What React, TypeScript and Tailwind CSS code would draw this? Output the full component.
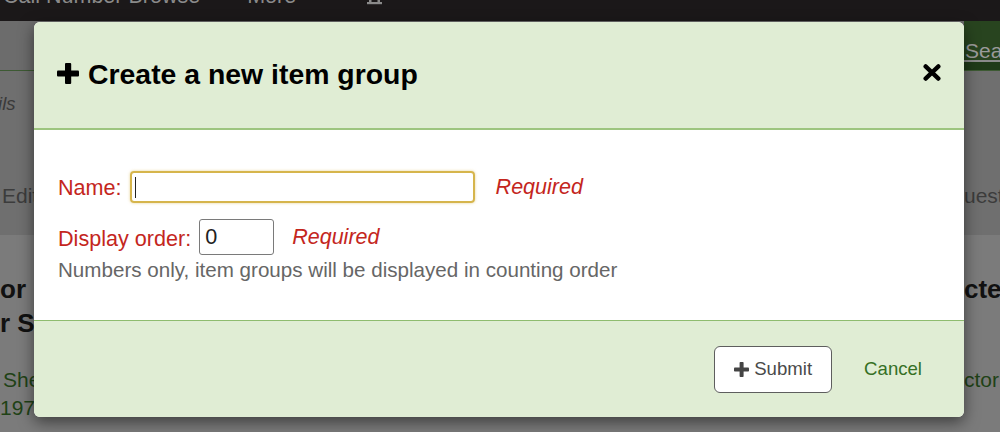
import React from "react";

function PlusIcon({ className }: { className?: string }) {
  return (
    <svg viewBox="0 0 22 21" className={className} fill="currentColor">
      <rect x="8" y="0" width="6.2" height="21" rx="1" />
      <rect x="0" y="7.4" width="22" height="6.2" rx="1" />
    </svg>
  );
}

function SmallPlus({ className }: { className?: string }) {
  return (
    <svg viewBox="0 0 15 15" className={className} fill="currentColor">
      <rect x="5.6" y="0" width="4" height="15" rx="0.8" />
      <rect x="0" y="5.5" width="15" height="4" rx="0.8" />
    </svg>
  );
}

function CloseIcon() {
  return (
    <svg viewBox="0 0 18 17" className="w-[18px] h-[17px]">
      <path
        d="M2.6 2.4 L15.4 14.6 M15.4 2.4 L2.6 14.6"
        stroke="#000"
        strokeWidth="4.3"
        strokeLinecap="round"
        fill="none"
      />
    </svg>
  );
}

function CartBottom() {
  return (
    <svg viewBox="0 0 15 6" className="w-[15px] h-[6px] block" fill="#8a8a8a">
      <rect x="2" y="0" width="2.5" height="4" />
      <rect x="10.5" y="0" width="2.5" height="4" />
      <rect x="0" y="3" width="15" height="2.2" />
    </svg>
  );
}

export default function App() {
  return (
    <div className="relative w-[1000px] h-[432px] overflow-hidden bg-[#7b7b7b] font-['Liberation_Sans',Arial,sans-serif]">
      {/* Background page (dimmed) */}
      <div className="flex flex-col w-[1000px]">
        <nav className="h-[21px] bg-[#1b1819] overflow-hidden text-[21.5px] leading-[21px] text-[#8a8a8a] whitespace-nowrap">
          <div className="-mt-[14px] flex items-start">
            <span className="ml-[3px]">Call Number Browse</span>
            <span className="ml-[47px]">More</span>
            <span className="ml-[10px] text-[12px]">▾</span>
            <span className="ml-[55px] mt-[13px]">
              <CartBottom />
            </span>
          </div>
        </nav>

        <div className="h-[50px] flex justify-between border-b border-[#3d5a33]">
          <div className="flex-1 bg-[#6c6c6c]" />
          <div className="w-[36px] flex flex-col bg-[#28441f] overflow-hidden">
            <div className="h-[39px] text-[21px] leading-[24px] pt-[18px] text-[#9b9b9b] whitespace-nowrap pl-[1px]">
              Search
            </div>
            <div className="h-[2px] bg-[#8a8a8a]" />
            <div className="flex-1 bg-[#1f3a18]" />
          </div>
        </div>

        <div className="h-[164px] bg-[#6f6f6f] flex flex-col">
          <div className="mt-[23px] h-[20px] text-[18.5px] leading-[20px] italic text-[#3a3a3a] whitespace-nowrap -ml-[41px]">
            Details
          </div>
          <div className="mt-[70px] h-[24px] flex justify-between text-[21px] leading-[24px] text-[#3c3c3c] whitespace-nowrap">
            <span className="pl-[2px]">Edit</span>
            <span className="w-[36px] overflow-hidden">uest</span>
          </div>
        </div>

        <div className="flex-1 flex flex-col">
          <div className="mt-[33px] h-[42px] flex justify-between text-[26px] leading-[42px] font-bold text-[#111] whitespace-nowrap">
            <span>or</span>
            <span className="w-[36px] overflow-hidden">cte</span>
          </div>
          <div className="h-[42px] -mt-[8px] text-[26px] leading-[42px] font-bold text-[#111] whitespace-nowrap">
            r S
          </div>
          <div className="mt-[22px] h-[28px] flex justify-between text-[21px] leading-[28px] text-[#1f4216] whitespace-nowrap">
            <span className="pl-[3px]">She</span>
            <span className="w-[36px] overflow-hidden">ctor</span>
          </div>
          <div className="h-[28px] text-[21px] leading-[28px] text-[#1f4216] whitespace-nowrap">
            1970
          </div>
        </div>
      </div>

      {/* Modal dialog */}
      <div className="absolute left-[34px] top-[22px] w-[930px] h-[395px] rounded-[6px] overflow-hidden flex flex-col bg-white shadow-[0_5px_15px_rgba(0,0,0,0.5)]">
        <div className="h-[108px] bg-[#e0edd4] border-b-2 border-[#9dc57f] flex items-center justify-between pl-[23px] pr-[23px]">
          <div className="flex items-center -mt-[3px]">
            <PlusIcon className="w-[22px] h-[21px] text-black" />
            <h1 className="ml-[9px] text-[28.4px] leading-[32px] font-bold text-black">
              Create a new item group
            </h1>
          </div>
          <div className="-mt-[5px]">
            <CloseIcon />
          </div>
        </div>

        <div className="h-[191px] border-b border-[#8fbc6f] pl-[24px] pt-[41px] flex flex-col">
          <div className="flex items-center h-[32px]">
            <label className="text-[21.6px] leading-[25px] text-[#c4261d]">Name:</label>
            <div className="ml-[8px] w-[345px] h-[32px] rounded-[4px] border-2 border-[#d6b54c] shadow-[0_0_3px_rgba(214,181,76,0.6)] flex items-center">
              <span className="ml-[3px] w-[1px] h-[21px] bg-[#222]" />
            </div>
            <span className="ml-[21px] text-[21.5px] leading-[25px] italic text-[#c4261d]">Required</span>
          </div>
          <div className="mt-[16px] flex items-center h-[36px]">
            <label className="text-[21.6px] leading-[25px] text-[#c4261d] pt-[3px]">Display order:</label>
            <div className="ml-[8px] w-[75px] h-[36px] rounded-[3px] border border-[#7a7a7a] flex items-center pl-[5px] text-[21.6px] text-[#222]">
              0
            </div>
            <span className="ml-[18px] text-[21.5px] leading-[25px] italic text-[#c4261d]">Required</span>
          </div>
          <div className="mt-[3px] text-[20.6px] leading-[24px] text-[#666]">
            Numbers only, item groups will be displayed in counting order
          </div>
        </div>

        <div className="flex-1 bg-[#e0edd4] flex items-center justify-end pr-[42px]">
          <button className="w-[118px] h-[47px] rounded-[6px] border-[1.5px] border-[#5e5e5e] bg-white flex items-center justify-center text-[18.6px] text-[#4a4a4a]">
            <SmallPlus className="w-[15px] h-[15px] text-[#444]" />
            <span className="ml-[5px]">Submit</span>
          </button>
          <span className="ml-[32px] text-[18.6px] text-[#357024]">Cancel</span>
        </div>
      </div>
    </div>
  );
}
